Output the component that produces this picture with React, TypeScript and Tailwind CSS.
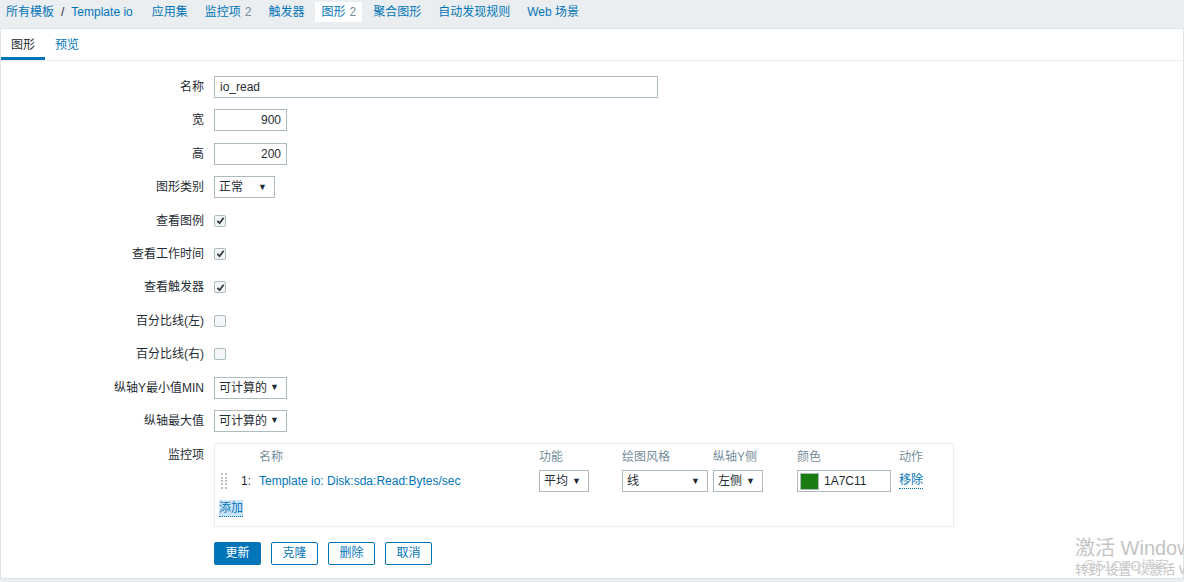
import { ReactNode } from 'react';

const FONT = { fontFamily: '"Liberation Sans", Arial, "Noto Sans CJK SC", sans-serif' };

const navItems = [
  { label: '应用集' },
  { label: '监控项', count: '2' },
  { label: '触发器' },
  { label: '图形', count: '2', active: true },
  { label: '聚合图形' },
  { label: '自动发现规则' },
  { label: 'Web 场景' },
];

const Select = ({ value, width }: { value: string; width: string }) => (
  <div
    className={`${width} h-[22px] flex items-center justify-between border border-[#acbbc0] bg-white pl-[4px] pr-[7px] text-[12px] text-[#1f2c33]`}
  >
    <span>{value}</span>
    <span className="text-[9px] leading-none">▼</span>
  </div>
);

const Checkbox = ({ checked }: { checked?: boolean }) => (
  <div className="w-[12px] h-[12px] rounded-[2px] border border-[#acbbc0] bg-[#f4f5f6] flex items-center justify-center">
    {checked && (
      <svg width="9" height="9" viewBox="0 0 10 10">
        <path d="M1.5 5.5 L4 8 L8.5 2" fill="none" stroke="#2f3a40" strokeWidth="2" />
      </svg>
    )}
  </div>
);

const Row = ({ label, children }: { label: string; children: ReactNode }) => (
  <>
    <div className="h-[22px] flex items-center justify-end text-[12px] text-[#1f2c33]">{label}</div>
    <div className="h-[22px] flex items-center">{children}</div>
  </>
);

const Button = ({ children, primary }: { children: ReactNode; primary?: boolean }) => (
  <button
    className={`w-[47px] h-[23px] rounded-[2px] border text-[12px] ${
      primary ? 'bg-[#0275b8] border-[#0275b8] text-white' : 'bg-white border-[#0275b8] text-[#0275b8]'
    }`}
  >
    {children}
  </button>
);

export default function App() {
  return (
    <div className="relative w-[1184px] h-[582px] overflow-hidden bg-[#ebeef0]" style={FONT}>
      <div className="h-[29px] flex items-start pt-[2px] text-[12px] border-b border-[#dfe4e7]">
        <div className="h-[20px] flex items-center pl-[6px] pr-[13px] text-[#0275b8]">
          <span>所有模板</span>
          <span className="mx-[7px] text-[#1f2c33]">/</span>
          <span>Template io</span>
        </div>
        {navItems.map((n) => (
          <div
            key={n.label}
            className={`h-[20px] flex items-center px-[6px] mr-[5px] text-[#0275b8] ${n.active ? 'bg-white' : ''}`}
          >
            <span>{n.label}</span>
            {n.count && <span className="ml-[4px] text-[#768d99]">{n.count}</span>}
          </div>
        ))}
      </div>

      <div className="h-[550px] bg-white border-x border-b border-[#dfe4e7]">
        <div className="h-[32px] flex items-stretch border-b border-[#ebeef0] text-[12px]">
          <div className="w-[44px] flex items-center justify-center text-[#1f2c33] border-b-[3px] border-[#0275b8] pt-[3px]">
            图形
          </div>
          <div className="flex items-center px-[10px] text-[#0275b8]">预览</div>
        </div>

        <div className="grid grid-cols-[203px_1fr] gap-x-[10px] gap-y-[11.4px] pt-[15px]">
          <Row label="名称">
            <div className="w-[444px] h-[22px] border border-[#acbbc0] flex items-center px-[5px] text-[12px] text-[#1f2c33]">
              io_read
            </div>
          </Row>
          <Row label="宽">
            <div className="w-[73px] h-[22px] border border-[#acbbc0] flex items-center justify-end px-[5px] text-[12px] text-[#1f2c33]">
              900
            </div>
          </Row>
          <Row label="高">
            <div className="w-[73px] h-[22px] border border-[#acbbc0] flex items-center justify-end px-[5px] text-[12px] text-[#1f2c33]">
              200
            </div>
          </Row>
          <Row label="图形类别">
            <Select value="正常" width="w-[61px]" />
          </Row>
          <Row label="查看图例">
            <Checkbox checked />
          </Row>
          <Row label="查看工作时间">
            <Checkbox checked />
          </Row>
          <Row label="查看触发器">
            <Checkbox checked />
          </Row>
          <Row label="百分比线(左)">
            <Checkbox />
          </Row>
          <Row label="百分比线(右)">
            <Checkbox />
          </Row>
          <Row label="纵轴Y最小值MIN">
            <Select value="可计算的" width="w-[73px]" />
          </Row>
          <Row label="纵轴最大值">
            <Select value="可计算的" width="w-[73px]" />
          </Row>

          <div className="pt-[3px] text-right text-[12px] text-[#1f2c33]">监控项</div>
          <div className="w-[740px] h-[84px] border border-[#ebeef0] text-[12px]">
            <div className="grid grid-cols-[44px_280px_83px_91px_84px_102px_1fr] pt-[4px] text-[#768d99]">
              <div />
              <div>名称</div>
              <div>功能</div>
              <div>绘图风格</div>
              <div>纵轴Y侧</div>
              <div>颜色</div>
              <div>动作</div>
            </div>
            <div className="grid grid-cols-[44px_280px_83px_91px_84px_102px_1fr] mt-[4px] h-[22px] items-center">
              <div className="flex items-center">
                <div className="ml-[6px] w-[6px] h-[16px] grid grid-cols-2 gap-[1px]">
                  {Array.from({ length: 10 }).map((_, i) => (
                    <span key={i} className="w-[2px] h-[2px] bg-[#b9c4c9]" />
                  ))}
                </div>
                <span className="ml-[14px] text-[#1f2c33]">1:</span>
              </div>
              <div className="text-[#0275b8]">Template io: Disk:sda:Read:Bytes/sec</div>
              <Select value="平均" width="w-[50px]" />
              <Select value="线" width="w-[86px]" />
              <Select value="左侧" width="w-[50px]" />
              <div className="w-[94px] h-[22px] border border-[#acbbc0] flex items-center">
                <span className="ml-[2px] w-[19px] h-[17px] bg-[#1a7c11] border border-[#acbbc0]" />
                <span className="ml-[5px] text-[#1f2c33]">1A7C11</span>
              </div>
              <div className="text-[#0275b8] border-b border-dotted border-[#0275b8] w-fit leading-[15px]">移除</div>
            </div>
            <div className="mt-[8px] ml-[4px] w-fit bg-[#cce4f7] text-[#0275b8] border-b border-dotted border-[#0275b8] leading-[16px]">
              添加
            </div>
          </div>

          <div />
          <div className="flex gap-[10px] pt-[3px]">
            <Button primary>更新</Button>
            <Button>克隆</Button>
            <Button>删除</Button>
            <Button>取消</Button>
          </div>
        </div>
      </div>

      <div className="absolute left-[1075px] top-[538px] text-[#c4c4c4] leading-none whitespace-nowrap pointer-events-none">
        <div className="text-[20px]">激活 Windows</div>
        <div className="text-[13px] mt-[5px]">转到"设置"以激活 Windows。</div>
      </div>
      <div className="absolute left-[1082px] top-[556px] text-[14px] text-[#d0d0d0] whitespace-nowrap pointer-events-none">
        @51CTO博客
      </div>
    </div>
  );
}
